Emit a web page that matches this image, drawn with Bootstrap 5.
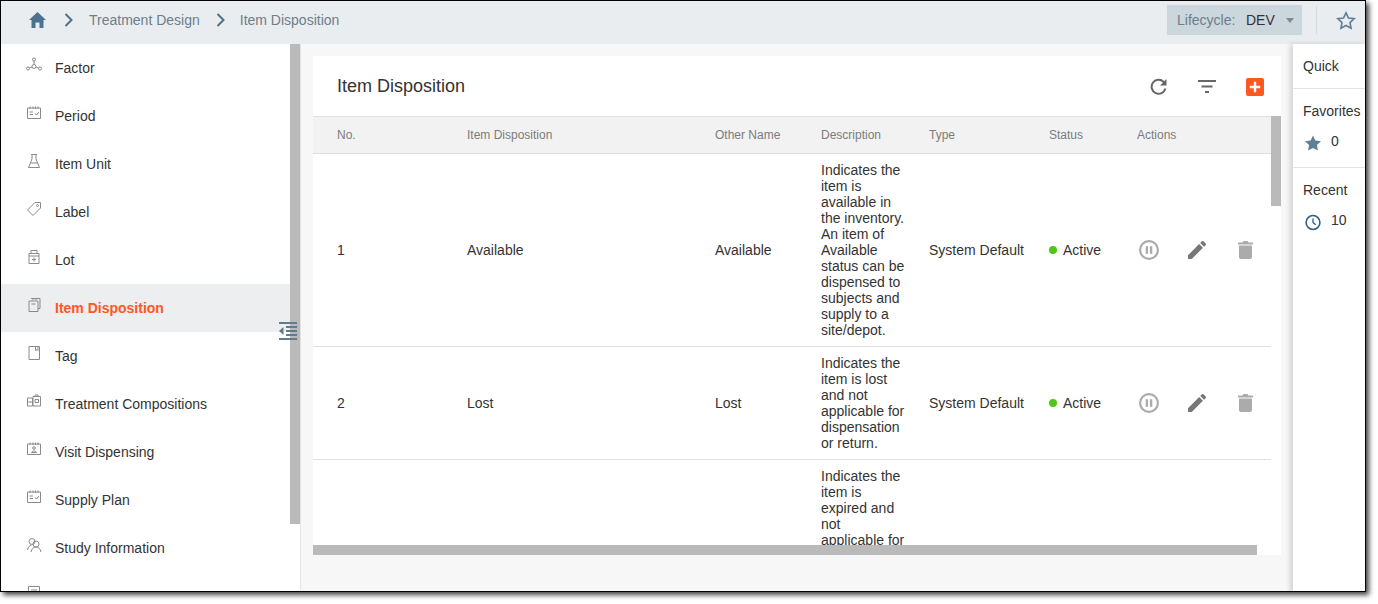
<!DOCTYPE html>
<html lang="en">
<head>
<meta charset="UTF-8">
<title>Item Disposition</title>
<link href="https://cdn.jsdelivr.net/npm/bootstrap@5.3.0/dist/css/bootstrap.min.css" rel="stylesheet">
<style>
    body { background: #fff; font-family: "Liberation Sans", Arial, sans-serif; font-size: 14px; color: #333; min-height: 604px; }
    .app-frame { width: 1366px; height: 592px; border: 1px solid #000; box-shadow: 3px 3px 5px #444; overflow: hidden; }
    .top-bar { height: 43px; background: #eaedf0; color: #6d7e8a; padding-bottom: 5px; }
    .crumb-home { margin-left: 28px; margin-right: 18px; }
    .crumb-gap { margin: 0 16px; }
    .crumb-last { margin-left: 15px; }
    .life-box { width: 135px; height: 30px; background: #ccd6dd; padding-left: 10px; }
    .life-label { width: 69px; }
    .life-value { color: #333; width: 40px; }
    .life-caret { width: 0; height: 0; border: 4px solid transparent; border-top: 5px solid #7b8a96; border-bottom: 0; }
    .top-rule { width: 1px; height: 28px; background: #d3dade; margin: 0 19px 0 14px; }
    .top-star { margin-right: 9px; }
    .app-body { height: 548px; }
    .side-nav { width: 300px; border-right: 1px solid #e3e3e3; background: #fff; }
    .side-row { height: 48px; padding-left: 25px; color: #333; }
    .side-row svg { width: 16px; height: 16px; margin-right: 13px; margin-top: -6px; flex: none; fill: none; stroke: #8a8a8a; stroke-width: 1; }
    .side-row.on { background: #eceef0; color: #ff5722; font-weight: 700; }
    .side-scroll { left: 289px; top: 0; width: 10px; height: 480px; background: #bababa; }
    .side-toggle { left: 278px; top: 278px; width: 18px; height: 18px; }
    .work-area { background: #f7f7f7; padding: 12px 12px 36px; width: 992px; }
    .sheet { width: 968px; height: 499px; background: #fff; }
    .sheet-head { height: 60px; padding-left: 24px; }
    .sheet-title { font-size: 18px; color: #333; }
    .sheet-tools { margin-top: 2px; margin-right: 17px; }
    .sheet-tools svg { display: block; }
    .tool-filter { margin: 0 30px; }
    .sheet-wrap { height: 391px; overflow: hidden; }
    .grid-head { height: 38px; background: #f2f2f2; border-top: 1px solid #e0e0e0; border-bottom: 1px solid #e0e0e0; color: #7c7c7c; font-size: 12px; width: 968px; }
    .grid-body { width: 958px; table-layout: fixed; border-collapse: collapse; line-height: 16px; }
    .grid-body td { border-bottom: 1px solid #e0e0e0; padding: 8px 0; vertical-align: middle; }
    .grid-body td.cell-desc { padding-right: 23px; }
    .c-no { width: 154px; padding-left: 24px !important; }
    .c-name { width: 248px; }
    .c-other { width: 106px; }
    .c-desc { width: 108px; }
    .c-type { width: 120px; }
    .c-status { width: 88px; }
    .c-act { width: 134px; }
    .grid-head > div { flex: none; }
    .dot-on { width: 8px; height: 8px; background: #52c41a; border-radius: 50%; margin-right: 6px; }
    .act-pause { margin-left: 2px; }
    .act-edit { margin-left: 29px; }
    .act-bin { margin-left: 32px; }
    .v-thumb { right: 0; top: 60px; width: 10px; height: 90px; background: #bababa; }
    .h-thumb { left: 0; bottom: 0; width: 944px; height: 10px; background: #bababa; }
    .quick-rail { width: 72px; background: #fff; box-shadow: -3px 0 5px rgba(0,0,0,.14); padding-left: 10px; }
    .quick-sec { margin-left: -10px; padding-left: 10px; border-bottom: 1px solid #e3e3e3; }
    .quick-one { height: 45px; }
    .quick-two { height: 79px; padding-top: 12px; }
    .quick-three { padding-top: 12px; }
    .quick-count { margin-top: 11px; line-height: 16px; }
    .quick-count svg { margin-left: 2px; margin-right: 10px; margin-top: 2px; }
</style>
</head>
<body>
<svg width="0" height="0" class="position-absolute">
    <defs>
        <symbol id="act-pause" viewBox="0 0 22 22"><circle cx="11" cy="11" r="9.800" fill="none" stroke="#ababab" stroke-width="2.400"/><rect x="7.400" y="6.800" width="2.600" height="8.400" fill="#ababab"/><rect x="12" y="6.800" width="2.600" height="8.400" fill="#ababab"/></symbol>
        <symbol id="act-pencil" viewBox="0 0 20 20"><path d="M0 20v-4.200L12.400 3.400l4.200 4.200L4.200 20zM13.600 2.200 15.400.4a1.300 1.300 0 0 1 1.800 0l2.400 2.400a1.300 1.300 0 0 1 0 1.800l-1.800 1.800z" fill="#777"/></symbol>
        <symbol id="act-trash" viewBox="0 0 15 18" preserveAspectRatio="none"><path d="M0 1.500h4.500L5.500 0h4l1 1.500H15v2H0zM1 4.500h13V16a2 2 0 0 1-2 2H3a2 2 0 0 1-2-2z" fill="#ababab"/></symbol>
        <symbol id="cal-check" viewBox="0 0 16 16"><path d="M1.500 3h13v10.500h-13zM4 1.500V4M7 1.500V4M9.500 1.500V4M12 1.500V4M3.500 7h3.500M3.500 9.500h3.500M9 8.500l1.500 1.500 2.500-3"/></symbol>
    </defs>
</svg>
<div class="app-frame d-flex flex-column">
    <div class="top-bar d-flex align-items-center flex-shrink-0">
        <svg class="crumb-home" width="17" height="16" viewBox="0 0 17 16"><path d="M8.500 0 17 8h-2.500v8h-4v-5.500h-4V16h-4V8H0z" fill="#4b7390"/></svg>
        <svg width="9" height="14" viewBox="0 0 9 14"><path d="M1.500 1 7.500 7l-6 6" fill="none" stroke="#4f7088" stroke-width="2"/></svg>
        <span class="crumb-gap">Treatment Design</span>
        <svg width="9" height="14" viewBox="0 0 9 14"><path d="M1.500 1 7.500 7l-6 6" fill="none" stroke="#4f7088" stroke-width="2"/></svg>
        <span class="crumb-gap crumb-last">Item Disposition</span>
        <div class="ms-auto life-box d-flex align-items-center">
            <span class="life-label">Lifecycle:</span>
            <span class="life-value">DEV</span>
            <span class="life-caret"></span>
        </div>
        <span class="top-rule"></span>
        <svg class="top-star" width="20" height="19" viewBox="0 0 20 19"><path d="M10 1.800 12.500 7l5.700.7-4.200 3.900 1.100 5.700L10 14.500l-5.100 2.800L6 11.600 1.800 7.700 7.500 7z" fill="none" stroke="#5f7f95" stroke-width="1.600"/></svg>
    </div>
    <div class="app-body d-flex">
        <nav class="side-nav position-relative overflow-hidden flex-shrink-0">
            <div class="side-row d-flex align-items-center"><svg viewBox="0 0 16 16"><circle cx="8" cy="2.500" r="1.500"/><circle cx="8" cy="9.500" r="2"/><circle cx="2" cy="11.500" r="1.500"/><circle cx="14" cy="11.500" r="1.500"/><path d="M8 4v3.500M3.500 11 6 10M12.500 11 10 10"/></svg>Factor</div>
            <div class="side-row d-flex align-items-center"><svg><use href="#cal-check"/></svg>Period</div>
            <div class="side-row d-flex align-items-center"><svg viewBox="0 0 16 16"><path d="M5 1.500h6M6 1.500V6L2.500 14.500h11L10 6V1.500M4.500 10h7"/></svg>Item Unit</div>
            <div class="side-row d-flex align-items-center"><svg viewBox="0 0 16 16"><path d="M9 1.500h5.500V7l-7.500 7.500L1.500 9z"/><circle cx="11.500" cy="4.500" r="1"/></svg>Label</div>
            <div class="side-row d-flex align-items-center"><svg viewBox="0 0 16 16"><path d="M5 1.500h6v3H5zM3 4.500h10v10H3zM3 7h10M8 8.500v4M6 10.500h4"/></svg>Lot</div>
            <div class="side-row on d-flex align-items-center"><svg viewBox="0 0 16 16"><path d="M5 1.500h9v10h-2M3 4h9v10.500H3zM7 1v2M10 1v2M5.500 7h4"/></svg>Item Disposition</div>
            <div class="side-row d-flex align-items-center"><svg viewBox="0 0 16 16"><path d="M3 1.500h10.500v13H3zM9.500 1.500v4l1.500-1 1 1v-4"/></svg>Tag</div>
            <div class="side-row d-flex align-items-center"><svg viewBox="0 0 16 16"><path d="M1.500 5h5v8h-5zM7 3.500h7.500V13H7zM9 2h3v1.500H9zM1.500 9h5M9 6.500h3.500v3H9z"/></svg>Treatment Compositions</div>
            <div class="side-row d-flex align-items-center"><svg viewBox="0 0 16 16"><path d="M1.500 3h13v10.500h-13zM4 1.500V4M7 1.500V4M9.500 1.500V4M12 1.500V4"/><circle cx="8" cy="7" r="1.300"/><path d="M5.500 11.500c.4-2 4.600-2 5 0z"/></svg>Visit Dispensing</div>
            <div class="side-row d-flex align-items-center"><svg><use href="#cal-check"/></svg>Supply Plan</div>
            <div class="side-row d-flex align-items-center"><svg viewBox="0 0 16 16"><circle cx="6" cy="4.500" r="3"/><circle cx="10" cy="7" r="3"/><path d="M1.500 13c.5-3 2-4.500 4-5M5 15c.5-3 2.500-5 5-5s4.500 2 5 5"/></svg>Study Information</div>
            <div class="side-row d-flex align-items-center"><svg viewBox="0 0 16 16"><path d="M2.500 1.500h11v13h-11zM5 5h6M5 8h6"/></svg></div>
            <div class="side-scroll position-absolute"></div>
            <svg class="side-toggle position-absolute" viewBox="0 0 18 18"><path d="M0 0h18v2H0zM7 4h11v2H7zM7 8h11v2H7zM7 12h11v2H7zM0 16h18v2H0z" fill="#5e7d90"/><path d="M4.500 5v8L0 9z" fill="#5e7d90"/></svg>
        </nav>
        <main class="work-area flex-shrink-0">
            <section class="sheet position-relative overflow-hidden">
                <div class="sheet-head d-flex align-items-center">
                    <span class="sheet-title">Item Disposition</span>
                    <div class="sheet-tools ms-auto d-flex align-items-center">
                        <svg width="18" height="18" viewBox="0 0 18 18"><path d="M15.400 10.500A7 7 0 1 1 13.500 3.700L15 5.500" fill="none" stroke="#666" stroke-width="2"/><path d="M16.500 1v6.500H10z" fill="#666"/></svg>
                        <svg class="tool-filter" width="18" height="14" viewBox="0 0 18 14"><path d="M0 1h18M3.500 6.500h11M7 12h4" stroke="#666" stroke-width="2"/></svg>
                        <svg width="18" height="18" viewBox="0 0 18 18"><rect width="18" height="18" rx="2" fill="#ff5722"/><path d="M9 3.800v10.400M3.800 9h10.400" stroke="#fff" stroke-width="2.400"/></svg>
                    </div>
                </div>
                <div class="grid-head d-flex align-items-center">
                    <div class="c-no">No.</div><div class="c-name">Item Disposition</div><div class="c-other">Other Name</div><div class="c-desc">Description</div><div class="c-type">Type</div><div class="c-status">Status</div><div class="c-act">Actions</div>
                </div>
                <div class="sheet-wrap">
                    <table class="grid-body">
                        <tbody>
                            <tr>
                                <td class="c-no">1</td><td class="c-name">Available</td><td class="c-other">Available</td>
                                <td class="c-desc cell-desc">Indicates the item is available in the inventory. An item of Available status can be dispensed to subjects and supply to a site/depot.</td>
                                <td class="c-type">System Default</td>
                                <td class="c-status"><div class="d-flex align-items-center"><span class="dot-on"></span>Active</div></td>
                                <td class="c-act"><div class="d-flex align-items-center"></div></td>
                            </tr>
                            <tr>
                                <td class="c-no">2</td><td class="c-name">Lost</td><td class="c-other">Lost</td>
                                <td class="c-desc cell-desc">Indicates the item is lost and not applicable for dispensation or return.</td>
                                <td class="c-type">System Default</td>
                                <td class="c-status"><div class="d-flex align-items-center"><span class="dot-on"></span>Active</div></td>
                                <td class="c-act"><div class="d-flex align-items-center"></div></td>
                            </tr>
                            <tr>
                                <td colspan="3"></td>
                                <td class="c-desc cell-desc">Indicates the item is expired and not applicable for</td>
                                <td colspan="3"></td>
                            </tr>
                        </tbody>
                    </table>
                </div>
                <div class="v-thumb position-absolute"></div>
                <div class="h-thumb position-absolute"></div>
            </section>
        </main>
        <aside class="quick-rail flex-shrink-0">
            <div class="quick-sec quick-one d-flex align-items-center">Quick</div>
            <div class="quick-sec quick-two">
                <div>Favorites</div>
                <div class="quick-count d-flex align-items-start"><svg width="16" height="16" viewBox="0 0 18 17"><path d="M9 0l2.700 5.700 6.300.8-4.600 4.300 1.200 6.200L9 14l-5.600 3 1.200-6.200L0 6.500l6.300-.8z" fill="#5f7f95"/></svg><span>0</span></div>
            </div>
            <div class="quick-three">
                <div>Recent</div>
                <div class="quick-count d-flex align-items-start"><svg width="16" height="17" viewBox="0 0 18 18"><circle cx="9" cy="9" r="7.800" fill="none" stroke="#2f5f8a" stroke-width="1.800"/><path d="M9 4.500V9l3 2.500" fill="none" stroke="#2f5f8a" stroke-width="1.500"/></svg><span>10</span></div>
            </div>
        </aside>
    </div>
</div>
<script src="https://cdn.jsdelivr.net/npm/bootstrap@5.3.0/dist/js/bootstrap.bundle.min.js"></script>
<script>
    // the three action icons repeat on every row
    document.querySelectorAll('.c-act > div').forEach(function (cell) {
        cell.innerHTML =
            '<svg class="act-pause" width="20" height="20"><use href="#act-pause"/></svg>' +
            '<svg class="act-edit" width="18" height="18"><use href="#act-pencil"/></svg>' +
            '<svg class="act-bin" width="15" height="18"><use href="#act-trash"/></svg>';
    });
</script>
</body>
</html>
